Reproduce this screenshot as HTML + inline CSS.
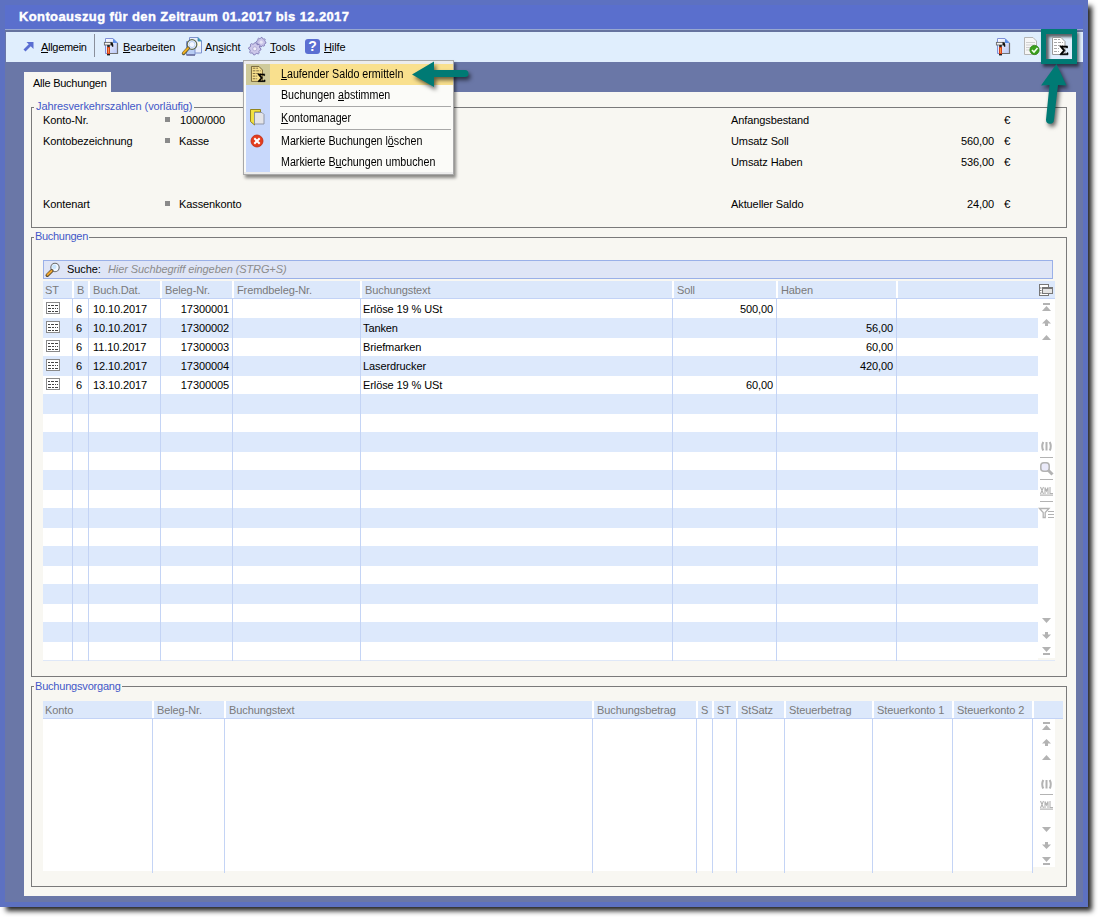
<!DOCTYPE html>
<html><head><meta charset="utf-8"><style>
*{box-sizing:border-box;margin:0;padding:0}
html,body{width:1098px;height:917px;overflow:hidden;background:#fff}
body{position:relative;font-family:"Liberation Sans",sans-serif;font-size:11px;color:#000;letter-spacing:-0.1px}
.a{position:absolute}
.t{position:absolute;white-space:nowrap;line-height:13px}
.box{position:absolute;border:1px solid #7a7a7a}
.lg{color:#4a5ec6}
.hd{color:#7a7a7a}
u{text-decoration:underline;text-underline-offset:1px}
svg{position:absolute;overflow:visible}
</style></head><body>
<div class="a" style="left:0px;top:0px;width:1088px;height:907px;background:#5d71c1;box-shadow:5px 5px 5px -1px rgba(0,0,0,.85)"></div>
<div class="a" style="left:5px;top:5px;width:1078px;height:24px;background:#5a6fcd;"></div>
<div class="t" style="left:19px;top:9px;color:#fff;font-weight:bold;font-size:13px;letter-spacing:.38px;line-height:15px;-webkit-text-stroke:0.4px #fff">Kontoauszug für den Zeitraum 01.2017 bis 12.2017</div>
<div class="a" style="left:5px;top:29px;width:1078px;height:1px;background:#98a8d0;"></div>
<div class="a" style="left:5px;top:30px;width:1078px;height:872px;background:#6a77a7;"></div>
<div class="a" style="left:5px;top:30px;width:1078px;height:2px;background:#66739f;"></div>
<div class="a" style="left:6px;top:32px;width:1077px;height:30px;background:#e0eefd;"></div>
<div class="a" style="left:24px;top:92px;width:1052px;height:804px;background:#f8f7f2;"></div>
<div class="a" style="left:24px;top:72px;width:87px;height:21px;background:#f8f7f2;"></div>
<div class="t" style="left:33px;top:77px;letter-spacing:-0.25px">Alle Buchungen</div>
<div class="box" style="left:31px;top:107px;width:1036px;height:121px"></div>
<div class="a" style="left:34px;top:100px;width:160px;height:14px;background:#f8f7f2;"></div>
<div class="t" style="left:36px;top:100px;color:#4358c8;letter-spacing:-0.1px">Jahresverkehrszahlen (vorläufig)</div>
<div class="t" style="left:43px;top:114px;">Konto-Nr.</div>
<div class="a" style="left:165px;top:117px;width:5px;height:5px;background:#8a8a8a;"></div>
<div class="t" style="left:180px;top:114px;">1000/000</div>
<div class="t" style="left:43px;top:135px;">Kontobezeichnung</div>
<div class="a" style="left:165px;top:138px;width:5px;height:5px;background:#8a8a8a;"></div>
<div class="t" style="left:179px;top:135px;">Kasse</div>
<div class="t" style="left:43px;top:198px;">Kontenart</div>
<div class="a" style="left:165px;top:201px;width:5px;height:5px;background:#8a8a8a;"></div>
<div class="t" style="left:179px;top:198px;">Kassenkonto</div>
<div class="t" style="left:731px;top:114px;">Anfangsbestand</div>
<div class="t" style="left:1004px;top:114px;font-size:11.5px">€</div>
<div class="t" style="left:731px;top:135px;">Umsatz Soll</div>
<div class="t" style="left:694px;width:300px;text-align:right;top:135px;">560,00</div>
<div class="t" style="left:1004px;top:135px;font-size:11.5px">€</div>
<div class="t" style="left:731px;top:156px;">Umsatz Haben</div>
<div class="t" style="left:694px;width:300px;text-align:right;top:156px;">536,00</div>
<div class="t" style="left:1004px;top:156px;font-size:11.5px">€</div>
<div class="t" style="left:731px;top:198px;">Aktueller Saldo</div>
<div class="t" style="left:694px;width:300px;text-align:right;top:198px;">24,00</div>
<div class="t" style="left:1004px;top:198px;font-size:11.5px">€</div>
<div class="box" style="left:31px;top:237px;width:1036px;height:440px"></div>
<div class="a" style="left:34px;top:230px;width:55px;height:14px;background:#f8f7f2;"></div>
<div class="t" style="left:35px;top:230px;color:#4358c8;letter-spacing:-0.3px">Buchungen</div>
<div class="a" style="left:43px;top:260px;width:1010px;height:19px;background:#dfe5f6;border:1px solid #9ab0e8"></div>
<div class="t" style="left:67px;top:263px;">Suche:</div>
<div class="t" style="left:108px;top:263px;font-style:italic;color:#8c8c8c">Hier Suchbegriff eingeben (STRG+S)</div>
<div class="a" style="left:43px;top:281px;width:1012px;height:17px;background:#dce8fb;"></div>
<div class="a" style="left:43px;top:298px;width:1012px;height:1px;background:#c3d3f6;"></div>
<div class="a" style="left:72px;top:281px;width:2px;height:17px;background:#ffffff;"></div>
<div class="a" style="left:88px;top:281px;width:2px;height:17px;background:#ffffff;"></div>
<div class="a" style="left:160px;top:281px;width:2px;height:17px;background:#ffffff;"></div>
<div class="a" style="left:232px;top:281px;width:2px;height:17px;background:#ffffff;"></div>
<div class="a" style="left:360px;top:281px;width:2px;height:17px;background:#ffffff;"></div>
<div class="a" style="left:672px;top:281px;width:2px;height:17px;background:#ffffff;"></div>
<div class="a" style="left:776px;top:281px;width:2px;height:17px;background:#ffffff;"></div>
<div class="a" style="left:896px;top:281px;width:2px;height:17px;background:#ffffff;"></div>
<div class="t" style="left:45px;top:284px;color:#7a7a7a">ST</div>
<div class="t" style="left:77px;top:284px;color:#7a7a7a">B</div>
<div class="t" style="left:93px;top:284px;color:#7a7a7a">Buch.Dat.</div>
<div class="t" style="left:165px;top:284px;color:#7a7a7a">Beleg-Nr.</div>
<div class="t" style="left:237px;top:284px;color:#7a7a7a">Fremdbeleg-Nr.</div>
<div class="t" style="left:365px;top:284px;color:#7a7a7a">Buchungstext</div>
<div class="t" style="left:677px;top:284px;color:#7a7a7a">Soll</div>
<div class="t" style="left:781px;top:284px;color:#7a7a7a">Haben</div>
<div class="a" style="left:43px;top:299px;width:995px;height:361px;background:#ffffff;"></div>
<div class="a" style="left:1038px;top:299px;width:17px;height:359px;background:#ffffff;"></div>
<div class="a" style="left:43px;top:318px;width:995px;height:20px;background:#dde9fc;"></div>
<div class="a" style="left:43px;top:356px;width:995px;height:20px;background:#dde9fc;"></div>
<div class="a" style="left:43px;top:394px;width:995px;height:20px;background:#dde9fc;"></div>
<div class="a" style="left:43px;top:432px;width:995px;height:20px;background:#dde9fc;"></div>
<div class="a" style="left:43px;top:470px;width:995px;height:20px;background:#dde9fc;"></div>
<div class="a" style="left:43px;top:508px;width:995px;height:20px;background:#dde9fc;"></div>
<div class="a" style="left:43px;top:546px;width:995px;height:20px;background:#dde9fc;"></div>
<div class="a" style="left:43px;top:584px;width:995px;height:20px;background:#dde9fc;"></div>
<div class="a" style="left:43px;top:622px;width:995px;height:20px;background:#dde9fc;"></div>
<div class="a" style="left:43px;top:660px;width:1012px;height:1px;background:#dfe8f8;"></div>
<div class="a" style="left:72px;top:299px;width:1px;height:362px;background:#c4d4f5;"></div>
<div class="a" style="left:88px;top:299px;width:1px;height:362px;background:#c4d4f5;"></div>
<div class="a" style="left:160px;top:299px;width:1px;height:362px;background:#c4d4f5;"></div>
<div class="a" style="left:232px;top:299px;width:1px;height:362px;background:#c4d4f5;"></div>
<div class="a" style="left:360px;top:299px;width:1px;height:362px;background:#c4d4f5;"></div>
<div class="a" style="left:672px;top:299px;width:1px;height:362px;background:#c4d4f5;"></div>
<div class="a" style="left:776px;top:299px;width:1px;height:362px;background:#c4d4f5;"></div>
<div class="a" style="left:896px;top:299px;width:1px;height:362px;background:#c4d4f5;"></div>
<div class="a" style="left:46px;top:302px;width:14px;height:12px;border:1px solid #8a8a8a;background:#fff"></div>
<svg style="left:46px;top:302px" width="14" height="12" viewBox="0 0 14 12"><path d="M2 3.5 H4 M5 3.5 H8 M9 3.5 H12 M2 6.5 H5 M6 6.5 H8 M9 6.5 H10 M11 6.5 H12 M2 9.5 H5 M6 9.5 H8 M9 9.5 H12" stroke="#444" stroke-width="1"/></svg>
<div class="t" style="left:76px;top:303px;">6</div>
<div class="t" style="left:93px;top:303px;">10.10.2017</div>
<div class="t" style="left:-71px;width:300px;text-align:right;top:303px;">17300001</div>
<div class="t" style="left:363px;top:303px;">Erlöse 19 % USt</div>
<div class="t" style="left:473px;width:300px;text-align:right;top:303px;">500,00</div>
<div class="a" style="left:46px;top:321px;width:14px;height:12px;border:1px solid #8a8a8a;background:#fff"></div>
<svg style="left:46px;top:321px" width="14" height="12" viewBox="0 0 14 12"><path d="M2 3.5 H4 M5 3.5 H8 M9 3.5 H12 M2 6.5 H5 M6 6.5 H8 M9 6.5 H10 M11 6.5 H12 M2 9.5 H5 M6 9.5 H8 M9 9.5 H12" stroke="#444" stroke-width="1"/></svg>
<div class="t" style="left:76px;top:322px;">6</div>
<div class="t" style="left:93px;top:322px;">10.10.2017</div>
<div class="t" style="left:-71px;width:300px;text-align:right;top:322px;">17300002</div>
<div class="t" style="left:363px;top:322px;">Tanken</div>
<div class="t" style="left:593px;width:300px;text-align:right;top:322px;">56,00</div>
<div class="a" style="left:46px;top:340px;width:14px;height:12px;border:1px solid #8a8a8a;background:#fff"></div>
<svg style="left:46px;top:340px" width="14" height="12" viewBox="0 0 14 12"><path d="M2 3.5 H4 M5 3.5 H8 M9 3.5 H12 M2 6.5 H5 M6 6.5 H8 M9 6.5 H10 M11 6.5 H12 M2 9.5 H5 M6 9.5 H8 M9 9.5 H12" stroke="#444" stroke-width="1"/></svg>
<div class="t" style="left:76px;top:341px;">6</div>
<div class="t" style="left:93px;top:341px;">11.10.2017</div>
<div class="t" style="left:-71px;width:300px;text-align:right;top:341px;">17300003</div>
<div class="t" style="left:363px;top:341px;">Briefmarken</div>
<div class="t" style="left:593px;width:300px;text-align:right;top:341px;">60,00</div>
<div class="a" style="left:46px;top:359px;width:14px;height:12px;border:1px solid #8a8a8a;background:#fff"></div>
<svg style="left:46px;top:359px" width="14" height="12" viewBox="0 0 14 12"><path d="M2 3.5 H4 M5 3.5 H8 M9 3.5 H12 M2 6.5 H5 M6 6.5 H8 M9 6.5 H10 M11 6.5 H12 M2 9.5 H5 M6 9.5 H8 M9 9.5 H12" stroke="#444" stroke-width="1"/></svg>
<div class="t" style="left:76px;top:360px;">6</div>
<div class="t" style="left:93px;top:360px;">12.10.2017</div>
<div class="t" style="left:-71px;width:300px;text-align:right;top:360px;">17300004</div>
<div class="t" style="left:363px;top:360px;">Laserdrucker</div>
<div class="t" style="left:593px;width:300px;text-align:right;top:360px;">420,00</div>
<div class="a" style="left:46px;top:378px;width:14px;height:12px;border:1px solid #8a8a8a;background:#fff"></div>
<svg style="left:46px;top:378px" width="14" height="12" viewBox="0 0 14 12"><path d="M2 3.5 H4 M5 3.5 H8 M9 3.5 H12 M2 6.5 H5 M6 6.5 H8 M9 6.5 H10 M11 6.5 H12 M2 9.5 H5 M6 9.5 H8 M9 9.5 H12" stroke="#444" stroke-width="1"/></svg>
<div class="t" style="left:76px;top:379px;">6</div>
<div class="t" style="left:93px;top:379px;">13.10.2017</div>
<div class="t" style="left:-71px;width:300px;text-align:right;top:379px;">17300005</div>
<div class="t" style="left:363px;top:379px;">Erlöse 19 % USt</div>
<div class="t" style="left:473px;width:300px;text-align:right;top:379px;">60,00</div>
<div class="box" style="left:31px;top:686px;width:1036px;height:201px"></div>
<div class="a" style="left:34px;top:679px;width:88px;height:14px;background:#f8f7f2;"></div>
<div class="t" style="left:35px;top:680px;color:#4358c8;letter-spacing:-0.2px">Buchungsvorgang</div>
<div class="a" style="left:43px;top:701px;width:1020px;height:17px;background:#dce8fb;"></div>
<div class="a" style="left:43px;top:718px;width:1020px;height:1px;background:#c3d3f6;"></div>
<div class="a" style="left:152px;top:701px;width:2px;height:17px;background:#ffffff;"></div>
<div class="a" style="left:224px;top:701px;width:2px;height:17px;background:#ffffff;"></div>
<div class="a" style="left:592px;top:701px;width:2px;height:17px;background:#ffffff;"></div>
<div class="a" style="left:696px;top:701px;width:2px;height:17px;background:#ffffff;"></div>
<div class="a" style="left:712px;top:701px;width:2px;height:17px;background:#ffffff;"></div>
<div class="a" style="left:736px;top:701px;width:2px;height:17px;background:#ffffff;"></div>
<div class="a" style="left:784px;top:701px;width:2px;height:17px;background:#ffffff;"></div>
<div class="a" style="left:872px;top:701px;width:2px;height:17px;background:#ffffff;"></div>
<div class="a" style="left:952px;top:701px;width:2px;height:17px;background:#ffffff;"></div>
<div class="a" style="left:1032px;top:701px;width:2px;height:17px;background:#ffffff;"></div>
<div class="t" style="left:45px;top:704px;color:#7a7a7a">Konto</div>
<div class="t" style="left:157px;top:704px;color:#7a7a7a">Beleg-Nr.</div>
<div class="t" style="left:229px;top:704px;color:#7a7a7a">Buchungstext</div>
<div class="t" style="left:597px;top:704px;color:#7a7a7a">Buchungsbetrag</div>
<div class="t" style="left:701px;top:704px;color:#7a7a7a">S</div>
<div class="t" style="left:717px;top:704px;color:#7a7a7a">ST</div>
<div class="t" style="left:741px;top:704px;color:#7a7a7a">StSatz</div>
<div class="t" style="left:789px;top:704px;color:#7a7a7a">Steuerbetrag</div>
<div class="t" style="left:877px;top:704px;color:#7a7a7a">Steuerkonto 1</div>
<div class="t" style="left:957px;top:704px;color:#7a7a7a">Steuerkonto 2</div>
<div class="a" style="left:43px;top:719px;width:989px;height:152px;background:#ffffff;"></div>
<div class="a" style="left:1032px;top:719px;width:23px;height:148px;background:#ffffff;"></div>
<div class="a" style="left:152px;top:719px;width:1px;height:154px;background:#c4d4f5;"></div>
<div class="a" style="left:224px;top:719px;width:1px;height:154px;background:#c4d4f5;"></div>
<div class="a" style="left:592px;top:719px;width:1px;height:154px;background:#c4d4f5;"></div>
<div class="a" style="left:696px;top:719px;width:1px;height:154px;background:#c4d4f5;"></div>
<div class="a" style="left:712px;top:719px;width:1px;height:154px;background:#c4d4f5;"></div>
<div class="a" style="left:736px;top:719px;width:1px;height:154px;background:#c4d4f5;"></div>
<div class="a" style="left:784px;top:719px;width:1px;height:154px;background:#c4d4f5;"></div>
<div class="a" style="left:872px;top:719px;width:1px;height:154px;background:#c4d4f5;"></div>
<div class="a" style="left:952px;top:719px;width:1px;height:154px;background:#c4d4f5;"></div>
<div class="a" style="left:1032px;top:719px;width:1px;height:154px;background:#c4d4f5;"></div>
<svg style="left:0;top:0" width="1098" height="917" viewBox="0 0 1098 917"><path d="M24.5 50.5 L31 44" stroke="#5a6ed2" stroke-width="2.8" stroke-linecap="butt"/><path d="M26.5 42 L33.5 42 L33.5 49 Z" fill="#5a6ed2"/></svg>
<div class="t" style="left:41px;top:41px;letter-spacing:-0.3px"><u>A</u>llgemein</div>
<div class="a" style="left:94px;top:34px;width:1px;height:23px;background:#8a8f9c;"></div>
<svg style="left:103px;top:38px" width="16" height="18" viewBox="0 0 16 18"><defs><linearGradient id="hd" x1="0" y1="0" x2="1" y2="1"><stop offset="0" stop-color="#ffffff"/><stop offset="1" stop-color="#b9c6f6"/></linearGradient></defs><path d="M2.5 0.5 H10 L14.5 5 V15.5 H2.5 Z" fill="url(#hd)" stroke="#8090d8" stroke-width="1"/><path d="M14.5 5 V15.5 H4.5" fill="none" stroke="#707070" stroke-width="1.2"/><path d="M10 0.5 L14.5 5 L10 5 Z" fill="#5b8ee8"/><rect x="1.4" y="4.4" width="8" height="2.6" fill="#f4f4f4" stroke="#6a6a6a" stroke-width="0.9"/><path d="M7.5 4.3 Q10.8 4.3 10.3 8.8 L9 8.8 Q9 6.8 7.5 6.8 Z" fill="#111"/><rect x="4.2" y="7" width="2.6" height="2.2" fill="#2a2a2a"/><rect x="4" y="9" width="3" height="8" fill="#d8401a"/><rect x="5" y="10" width="0.9" height="5" fill="#f0a050"/><rect x="4" y="16" width="3" height="1.4" fill="#222"/></svg>
<div class="t" style="left:123px;top:41px;"><u>B</u>earbeiten</div>
<svg style="left:182px;top:37px" width="22" height="19" viewBox="0 0 22 19"><path d="M7.5 0.5 H16 L19.5 4 V16 H7.5 Z" fill="#e8eefc" stroke="#7f93cf" stroke-width="1"/><path d="M16 0.5 V4 H19.5" fill="#3a9ab8" stroke="#3a8ab0" stroke-width="0.8"/><rect x="16" y="5" width="2.5" height="4" fill="#fffde0"/><path d="M4.5 4.5 H13 V18 H4.5 Z" fill="#b8cdf4" stroke="#7f93cf" stroke-width="1"/><path d="M4.5 18 H13" stroke="#5a5a8a" stroke-width="1.2"/><circle cx="10" cy="7.5" r="4.8" fill="#f4f8ff" stroke="#5f6a50" stroke-width="1.2"/><circle cx="10" cy="7.5" r="3" fill="none" stroke="#b8cff4" stroke-width="1"/><path d="M6.3 11.2 L1.5 16.5" stroke="#5a5a40" stroke-width="3.4" stroke-linecap="round"/><path d="M6 11.2 L1.5 16" stroke="#f0b020" stroke-width="2" stroke-linecap="round"/></svg>
<div class="t" style="left:205px;top:41px;">An<u>s</u>icht</div>
<svg style="left:248px;top:37px" width="20" height="19" viewBox="0 0 20 19"><polygon points="18.00,5.20 17.91,6.14 16.75,6.67 16.39,7.33 16.59,8.59 15.87,9.19 14.67,8.75 13.95,8.97 13.20,10.00 12.26,9.91 11.73,8.75 11.07,8.39 9.81,8.59 9.21,7.87 9.65,6.67 9.43,5.95 8.40,5.20 8.49,4.26 9.65,3.73 10.01,3.07 9.81,1.81 10.53,1.21 11.73,1.65 12.45,1.43 13.20,0.40 14.14,0.49 14.67,1.65 15.33,2.01 16.59,1.81 17.19,2.53 16.75,3.73 16.97,4.45" fill="#c9c4e8" stroke="#6a62a6" stroke-width="0.7"/><circle cx="13.2" cy="5.2" r="1.6" fill="#e8e6f6"/><polygon points="13.00,11.80 12.88,13.01 11.38,13.70 10.92,14.56 11.18,16.18 10.24,16.96 8.70,16.38 7.77,16.66 6.80,18.00 5.59,17.88 4.90,16.38 4.04,15.92 2.42,16.18 1.64,15.24 2.22,13.70 1.94,12.77 0.60,11.80 0.72,10.59 2.22,9.90 2.68,9.04 2.42,7.42 3.36,6.64 4.90,7.22 5.83,6.94 6.80,5.60 8.01,5.72 8.70,7.22 9.56,7.68 11.18,7.42 11.96,8.36 11.38,9.90 11.66,10.83" fill="#cdc8ea" stroke="#6a62a6" stroke-width="0.7"/><circle cx="6.8" cy="11.8" r="2" fill="#f0eefa" stroke="#9a93c4" stroke-width="0.6"/></svg>
<div class="t" style="left:270px;top:41px;"><u>T</u>ools</div>
<div class="a" style="left:305px;top:39px;width:15px;height:15px;background:#5b6fd2;border-radius:3px"></div>
<div class="t" style="left:305px;top:39px;width:15px;text-align:center;color:#fff;font-weight:bold;font-size:14px;line-height:15px;letter-spacing:0">?</div>
<div class="t" style="left:324px;top:41px;"><u>H</u>ilfe</div>
<svg style="left:995px;top:38px" width="16" height="18" viewBox="0 0 16 18"><defs><linearGradient id="hd" x1="0" y1="0" x2="1" y2="1"><stop offset="0" stop-color="#ffffff"/><stop offset="1" stop-color="#b9c6f6"/></linearGradient></defs><path d="M2.5 0.5 H10 L14.5 5 V15.5 H2.5 Z" fill="url(#hd)" stroke="#8090d8" stroke-width="1"/><path d="M14.5 5 V15.5 H4.5" fill="none" stroke="#707070" stroke-width="1.2"/><path d="M10 0.5 L14.5 5 L10 5 Z" fill="#5b8ee8"/><rect x="1.4" y="4.4" width="8" height="2.6" fill="#f4f4f4" stroke="#6a6a6a" stroke-width="0.9"/><path d="M7.5 4.3 Q10.8 4.3 10.3 8.8 L9 8.8 Q9 6.8 7.5 6.8 Z" fill="#111"/><rect x="4.2" y="7" width="2.6" height="2.2" fill="#2a2a2a"/><rect x="4" y="9" width="3" height="8" fill="#d8401a"/><rect x="5" y="10" width="0.9" height="5" fill="#f0a050"/><rect x="4" y="16" width="3" height="1.4" fill="#222"/></svg>
<svg style="left:1023px;top:36px" width="20" height="20" viewBox="0 0 20 20"><path d="M1.5 1.5 H10 L13.5 5 V18.5 H1.5 Z" fill="#f6f6f6" stroke="#b5b5b5" stroke-width="1"/><path d="M3 6.5 H12 M3 9 H12 M3 11.5 H9 M3 14 H8" stroke="#cfcfcf" stroke-width="1"/><circle cx="11.5" cy="14" r="4.6" fill="#3aa01c" stroke="#2a7d10" stroke-width="0.8"/><path d="M9 14 L11 16 L14.5 12" fill="none" stroke="#f4fff0" stroke-width="1.6"/></svg>
<div class="a" style="left:1041px;top:29px;width:36px;height:35px;border:5px solid #007a74;box-shadow:2px 3px 3px rgba(0,0,0,.55), inset 3px 3px 3px rgba(0,0,0,.6);"></div>
<svg style="left:1052px;top:37px" width="18.0" height="19.0" viewBox="0 0 18 19"><path d="M0.5 0.5 H9 L13 4.5 V17.5 H0.5 Z" fill="#ffffff" stroke="#9a9a9a" stroke-width="1"/><path d="M2 2.5 H8 M2 5.5 H11 M2 8.5 H11 M2 11.5 H7 M2 14.5 H7" stroke="#a8a8a8" stroke-width="1.1" stroke-dasharray="3 1"/><path d="M8 9 H15.5 V11 H14.6 L14.3 10.2 H10.8 L13 13.5 L10.5 16.8 H14.6 L15 15.8 H16 V17.8 H8 V17.2 L11.2 13.5 L8 9.6 Z" fill="#000" stroke="#000" stroke-width="0.6" stroke-linejoin="round"/></svg>
<svg style="left:0;top:0" width="1098" height="917" viewBox="0 0 1098 917"><rect x="1043.0" y="303" width="7" height="2" fill="#b3b3b3"/><path d="M1042.0 311 L1046.5 306 L1051.0 311 Z" fill="#b3b3b3"/><path d="M1042.0 323.5 L1046.5 319 L1051.0 323.5 L1048.0 323.5 L1048.0 326 L1045.0 326 L1045.0 323.5 Z" fill="#b3b3b3"/><path d="M1042.0 340 L1046.5 335 L1051.0 340 Z" fill="#b3b3b3"/><path d="M1043.3 442 Q1041.1 446.25 1043.3 450.5" fill="none" stroke="#b3b3b3" stroke-width="2"/><path d="M1049.7 442 Q1051.9 446.25 1049.7 450.5" fill="none" stroke="#b3b3b3" stroke-width="2"/><rect x="1045.5" y="442" width="2" height="8.5" fill="#b3b3b3"/><rect x="1040" y="457" width="13" height="1" fill="#b3b3b3"/><rect x="1040.8" y="462.8" width="8.4" height="8.4" rx="3" fill="#eaeafa" stroke="#b3b3b3" stroke-width="1.6"/><path d="M1048 470 L1052.5 474.5" stroke="#b3b3b3" stroke-width="3"/><rect x="1040" y="479" width="13" height="1" fill="#b3b3b3"/><path d="M1040.5 487 L1043.5 494 M1043.5 487 L1040.5 494 M1045.0 494 V487.5 L1046.5 491 L1048.0 487.5 V494 M1050.0 487 V493.5 H1053.0" fill="none" stroke="#b3b3b3" stroke-width="1.1"/><rect x="1040.0" y="494.5" width="13" height="1.2" fill="#b3b3b3"/><rect x="1040" y="501" width="13" height="1" fill="#b3b3b3"/><path d="M1039.5 508.5 H1049 L1045.2 512.5 V517.5 H1043.2 V512.5 Z" fill="#fff" stroke="#b3b3b3" stroke-width="1.3"/><path d="M1048 511.5 H1054 M1048 514.5 H1054 M1048 517.5 H1054" stroke="#b3b3b3" stroke-width="1.1"/><path d="M1042.0 618 L1046.5 623 L1051.0 618 Z" fill="#b3b3b3"/><path d="M1045.0 632 L1048.0 632 L1048.0 634.5 L1051.0 634.5 L1046.5 639 L1042.0 634.5 L1045.0 634.5 Z" fill="#b3b3b3"/><path d="M1042.0 647 L1046.5 652 L1051.0 647 Z" fill="#b3b3b3"/><rect x="1043.0" y="653" width="7" height="2" fill="#b3b3b3"/><rect x="1043.0" y="722" width="7" height="2" fill="#b3b3b3"/><path d="M1042.0 730 L1046.5 725 L1051.0 730 Z" fill="#b3b3b3"/><path d="M1042.0 743.5 L1046.5 739 L1051.0 743.5 L1048.0 743.5 L1048.0 746 L1045.0 746 L1045.0 743.5 Z" fill="#b3b3b3"/><path d="M1042.0 760 L1046.5 755 L1051.0 760 Z" fill="#b3b3b3"/><path d="M1043.3 780 Q1041.1 784.25 1043.3 788.5" fill="none" stroke="#b3b3b3" stroke-width="2"/><path d="M1049.7 780 Q1051.9 784.25 1049.7 788.5" fill="none" stroke="#b3b3b3" stroke-width="2"/><rect x="1045.5" y="780" width="2" height="8.5" fill="#b3b3b3"/><rect x="1040" y="794" width="13" height="1" fill="#b3b3b3"/><path d="M1040.5 801 L1043.5 808 M1043.5 801 L1040.5 808 M1045.0 808 V801.5 L1046.5 805 L1048.0 801.5 V808 M1050.0 801 V807.5 H1053.0" fill="none" stroke="#b3b3b3" stroke-width="1.1"/><rect x="1040.0" y="808.5" width="13" height="1.2" fill="#b3b3b3"/><path d="M1042.0 827 L1046.5 832 L1051.0 827 Z" fill="#b3b3b3"/><path d="M1045.0 842 L1048.0 842 L1048.0 844.5 L1051.0 844.5 L1046.5 849 L1042.0 844.5 L1045.0 844.5 Z" fill="#b3b3b3"/><path d="M1042.0 857 L1046.5 862 L1051.0 857 Z" fill="#b3b3b3"/><rect x="1043.0" y="863" width="7" height="2" fill="#b3b3b3"/><rect x="1039.5" y="284.5" width="9" height="11" fill="#fff" stroke="#777" stroke-width="1"/><rect x="1042.5" y="287.5" width="10" height="6" fill="#e4e4e4" stroke="#777" stroke-width="1"/><rect x="1042.5" y="287.5" width="10" height="1.5" fill="#777"/><path d="M1039.5 288 H1041.5 M1039.5 290.5 H1041.5 M1039.5 293 H1041.5" stroke="#777" stroke-width="1"/><circle cx="55" cy="267.5" r="4.2" fill="#f2f8ff" stroke="#6b6b6b" stroke-width="1.1"/><circle cx="54.3" cy="266.8" r="2.2" fill="#c8e4fb"/><path d="M51.8 270.8 L47.3 275.2" stroke="#5a4a30" stroke-width="3.6" stroke-linecap="round"/><path d="M51.5 271 L47.5 274.8" stroke="#f0a830" stroke-width="2" stroke-linecap="round"/></svg>
<div class="a" style="left:243px;top:60px;width:211px;height:115px;background:#fbfbf8;border:1px solid #a8a8a8;box-shadow:2px 3px 3px rgba(0,0,0,.45)"></div>
<div class="a" style="left:244px;top:61px;width:209px;height:3px;background:#ececec;"></div>
<div class="a" style="left:244px;top:172px;width:209px;height:2px;background:#ececec;"></div>
<div class="a" style="left:246px;top:64px;width:24px;height:108px;background:#c8d8fb;"></div>
<div class="a" style="left:246px;top:64px;width:207px;height:21px;background:#f9e08e;"></div>
<div class="a" style="left:246px;top:64px;width:24px;height:21px;background:#cfca9a;"></div>
<div class="a" style="left:280px;top:106px;width:171px;height:1px;background:#a8a8a8;"></div>
<div class="a" style="left:280px;top:129px;width:171px;height:1px;background:#a8a8a8;"></div>
<div class="t" style="left:281px;top:68px;font-size:12px;letter-spacing:0;transform:scaleX(0.89);transform-origin:0 0"><u>L</u>aufender Saldo ermitteln</div>
<div class="t" style="left:281px;top:89px;font-size:12px;letter-spacing:0;transform:scaleX(0.89);transform-origin:0 0">Buchungen <u>a</u>bstimmen</div>
<div class="t" style="left:281px;top:112px;font-size:12px;letter-spacing:0;transform:scaleX(0.89);transform-origin:0 0"><u>K</u>ontomanager</div>
<div class="t" style="left:281px;top:135px;font-size:12px;letter-spacing:0;transform:scaleX(0.89);transform-origin:0 0">Markierte Buchungen l<u>ö</u>schen</div>
<div class="t" style="left:281px;top:156px;font-size:12px;letter-spacing:0;transform:scaleX(0.89);transform-origin:0 0">Markierte B<u>u</u>chungen umbuchen</div>
<svg style="left:251px;top:66px" width="15.84" height="16.72" viewBox="0 0 18 19"><path d="M0.5 0.5 H9 L13 4.5 V17.5 H0.5 Z" fill="#f7e08c" stroke="#6a5a30" stroke-width="1"/><path d="M2 2.5 H8 M2 5.5 H11 M2 8.5 H11 M2 11.5 H7 M2 14.5 H7" stroke="#7a6a40" stroke-width="1.1" stroke-dasharray="3 1"/><path d="M8 9 H15.5 V11 H14.6 L14.3 10.2 H10.8 L13 13.5 L10.5 16.8 H14.6 L15 15.8 H16 V17.8 H8 V17.2 L11.2 13.5 L8 9.6 Z" fill="#000" stroke="#000" stroke-width="0.6" stroke-linejoin="round"/></svg>
<svg style="left:250px;top:109px" width="15" height="17" viewBox="0 0 15 17"><path d="M0.5 0.5 H10.5 V3 H4.5 V16 L0.5 12.5 Z" fill="#f2e040" stroke="#8a7a10" stroke-width="0.9"/><path d="M4.5 3.5 H12 L14 5.5 V15 H4.5 Z" fill="#e4e4e8" stroke="#8890a0" stroke-width="0.9"/></svg>
<svg style="left:250px;top:134px" width="14" height="14" viewBox="0 0 14 14"><circle cx="7" cy="7" r="6" fill="#e43c1c" stroke="#c02a10" stroke-width="0.8"/><path d="M4.3 4.3 L9.7 9.7 M9.7 4.3 L4.3 9.7" stroke="#fff" stroke-width="2"/></svg>
<svg style="left:0;top:0;filter:drop-shadow(2px 3px 2px rgba(0,0,0,.6))" width="1098" height="917" viewBox="0 0 1098 917"><path d="M412 74.5 L434 61.5 L434 70 L465 70 A3.5 3.5 0 0 1 465 77 L434 77 L434 87 Z" fill="#007a74"/><path d="M1056.5 64 L1066.5 85.5 L1058 85 L1054 120 A4 4 0 0 1 1046 119.5 L1049.5 85 L1041 85.5 Z" fill="#007a74"/></svg>
</body></html>
